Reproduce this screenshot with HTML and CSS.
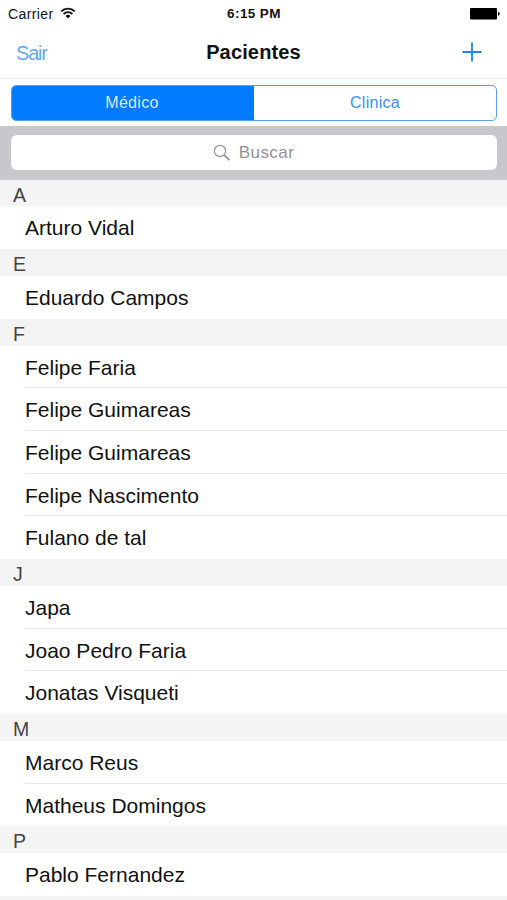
FILE: index.html
```html
<!DOCTYPE html>
<html lang="pt-BR">
<head>
    <meta charset="UTF-8">
    <meta name="viewport" content="width=device-width, initial-scale=1.0">
    <title>Pacientes</title>
    <link rel="stylesheet" href="styles.css">
</head>
<body>
    <div class="status-bar">
        <div class="carrier">
            <span>Carrier</span>
            <svg class="wifi" viewBox="0 0 16 12" width="16" height="12">
                <path d="M1.2 4.4a9.7 9.7 0 0 1 13.6 0M3.6 7a6.2 6.2 0 0 1 8.8 0" fill="none" stroke="#111" stroke-width="1.9"/>
                <path d="M8 11.6L5.5 9a3.6 3.6 0 0 1 5 0z" fill="#111"/>
            </svg>
        </div>
        <div class="time">6:15 PM</div>
        <svg class="battery" viewBox="0 0 30 12" width="30" height="12">
            <rect width="27" height="11.5" rx="1" fill="#000"/>
            <path d="M28 3.8c2.3.4 2.3 3.6 0 4z" fill="#000"/>
        </svg>
    </div>

    <header class="navbar">
        <a class="logout">Sair</a>
        <h1>Pacientes</h1>
        <svg class="add" viewBox="0 0 20 20" width="20" height="20">
            <path d="M10 .5v19M.5 10h19" stroke="#1a84f8" stroke-width="1.8"/>
        </svg>
    </header>

    <div class="tabs">
        <div class="segmented">
            <div class="segment active">Médico</div>
            <div class="segment">Clinica</div>
        </div>
    </div>

    <div class="search">
        <div class="search-field">
            <svg viewBox="0 0 18 18" width="18" height="18">
                <circle cx="7" cy="7" r="5.6" fill="none" stroke="#929296" stroke-width="1.2"/>
                <path d="M11.2 11.2l5.3 5" stroke="#929296" stroke-width="1.8"/>
            </svg>
            <span>Buscar</span>
        </div>
    </div>

    <main class="patients">
        <h2>A</h2>
        <ul>
            <li><span>Arturo Vidal</span></li>
        </ul>
        <h2>E</h2>
        <ul>
            <li><span>Eduardo Campos</span></li>
        </ul>
        <h2>F</h2>
        <ul>
            <li><span>Felipe Faria</span></li>
            <li><span>Felipe Guimareas</span></li>
            <li><span>Felipe Guimareas</span></li>
            <li><span>Felipe Nascimento</span></li>
            <li><span>Fulano de tal</span></li>
        </ul>
        <h2>J</h2>
        <ul>
            <li><span>Japa</span></li>
            <li><span>Joao Pedro Faria</span></li>
            <li><span>Jonatas Visqueti</span></li>
        </ul>
        <h2>M</h2>
        <ul>
            <li><span>Marco Reus</span></li>
            <li><span>Matheus Domingos</span></li>
        </ul>
        <h2>P</h2>
        <ul>
            <li><span>Pablo Fernandez</span></li>
        </ul>
        <div class="next-section"></div>
    </main>
</body>
</html>
```
FILE: styles.css
```css
* {
    margin: 0;
    padding: 0;
    box-sizing: border-box;
}

body {
    font-family: "Liberation Sans", Arial, sans-serif;
    background: #fff;
    color: #111;
    height: 900px;
    overflow: hidden;
}

.status-bar {
    display: grid;
    grid-template-columns: 1fr auto 1fr;
    align-items: center;
    height: 27px;
    padding: 0 7px 0 8px;
    font-size: 14px;
}

.carrier {
    display: flex;
    align-items: center;
    gap: 6px;
    letter-spacing: 0.4px;
}

.wifi {
    margin-top: -2px;
}

.time {
    font-weight: bold;
    font-size: 13.5px;
    letter-spacing: 0.4px;
}

.battery {
    justify-self: end;
}

.navbar {
    display: grid;
    grid-template-columns: 1fr auto 1fr;
    align-items: center;
    height: 52px;
    padding: 0 25px;
    border-bottom: 1px solid #ececee;
}

.logout {
    margin: 2px 0 0 -9px;
    color: #65aaf5;
    font-size: 20px;
    letter-spacing: -1.2px;
}

.navbar h1 {
    font-size: 20px;
    font-weight: bold;
    letter-spacing: 0.15px;
}

.add {
    justify-self: end;
    margin-top: -2px;
}

.tabs {
    height: 46.5px;
    padding: 6px 10px 5px 11px;
}

.segmented {
    display: flex;
    height: 36px;
    border: 1.5px solid #5a9fee;
    border-radius: 5px;
    overflow: hidden;
}

.segment {
    flex: 1;
    display: flex;
    align-items: center;
    justify-content: center;
    color: #3a8ff0;
    font-size: 16px;
    letter-spacing: 0.3px;
}

.segment.active {
    flex: 0 0 242px;
    padding-right: 2px;
    background: #007aff;
    color: #d9ebff;
}

.search {
    height: 54px;
    padding: 9.5px 10px 9px 11px;
    background: #c8c7cc;
}

.search-field {
    display: flex;
    align-items: center;
    justify-content: center;
    gap: 8px;
    height: 34.5px;
    padding: 1px 1px 0 0;
    background: #fff;
    border-radius: 6px;
    color: #929296;
    font-size: 17px;
    letter-spacing: 0.45px;
}

.patients h2 {
    height: 26.9px;
    padding: 2px 13px 0;
    background: #f4f4f4;
    color: #444;
    font-size: 19.5px;
    font-weight: normal;
    line-height: 26px;
}

.patients ul {
    list-style: none;
}

.patients li {
    height: 42.7px;
    padding-left: 25px;
    font-size: 21px;
    line-height: 43.5px;
}

.patients li span {
    display: block;
    height: 100%;
    border-bottom: 1px solid #e8e8ea;
}

.patients li:last-child span {
    border-bottom: none;
}

.next-section {
    height: 10px;
    background: #f4f4f4;
}
```
